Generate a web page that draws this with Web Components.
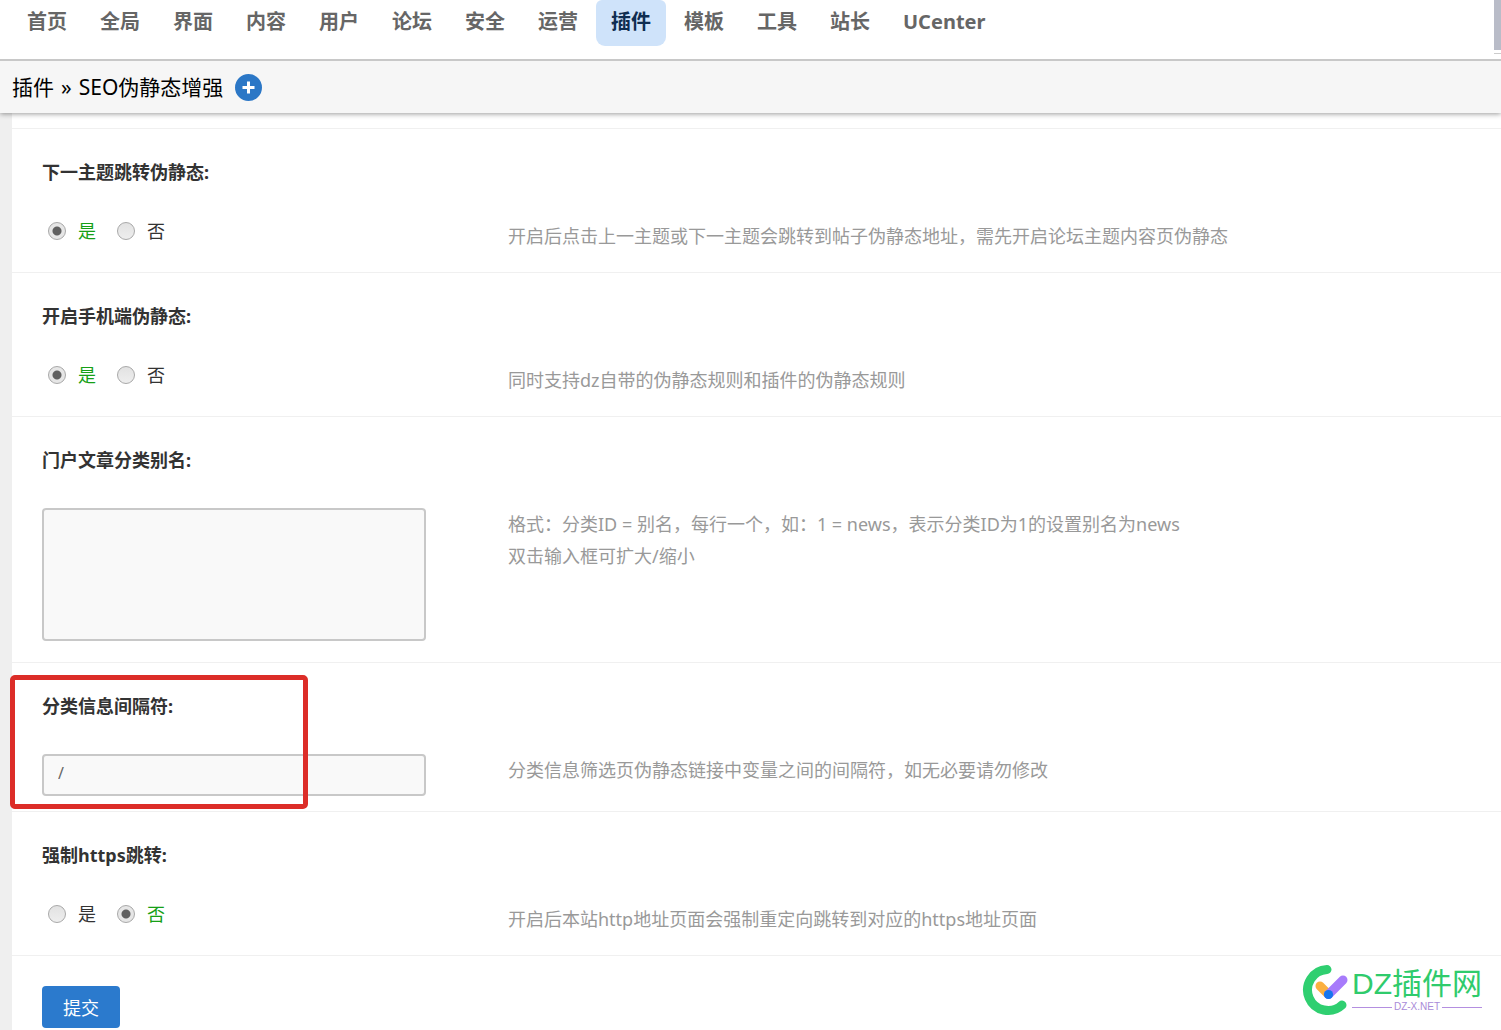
<!DOCTYPE html>
<html lang="zh-CN">
<head>
<meta charset="utf-8">
<title>SEO伪静态增强</title>
<style>
  html { background: #efefef; }
  body { margin: 0; font: 18px/32px "Noto Sans", "Noto Sans CJK SC", sans-serif; color: #333; }
</style>
</head>
<body>
<admin-page>
  <admin-nav slot="nav" items="首页,全局,界面,内容,用户,论坛,安全,运营,插件,模板,工具,站长,UCenter" current="插件"></admin-nav>
  <crumb-bar slot="crumb" parent="插件">SEO伪静态增强</crumb-bar>
  <setting-row heading="下一主题跳转伪静态:">
    <yes-no name="next" value="是"></yes-no>
    <span slot="hint">开启后点击上一主题或下一主题会跳转到帖子伪静态地址，需先开启论坛主题内容页伪静态</span>
  </setting-row>
  <setting-row heading="开启手机端伪静态:">
    <yes-no name="mobile" value="是"></yes-no>
    <span slot="hint">同时支持dz自带的伪静态规则和插件的伪静态规则</span>
  </setting-row>
  <setting-row heading="门户文章分类别名:">
    <text-field label="门户文章分类别名" multiline></text-field>
    <span slot="hint">格式：分类ID = 别名，每行一个，如：1 = news，表示分类ID为1的设置别名为news<br>双击输入框可扩大/缩小</span>
  </setting-row>
  <setting-row heading="分类信息间隔符:" marked>
    <text-field label="分类信息间隔符" value="/"></text-field>
    <span slot="hint">分类信息筛选页伪静态链接中变量之间的间隔符，如无必要请勿修改</span>
  </setting-row>
  <setting-row heading="强制https跳转:">
    <yes-no name="https" value="否"></yes-no>
    <span slot="hint">开启后本站http地址页面会强制重定向跳转到对应的https地址页面</span>
  </setting-row>
  <submit-bar>提交</submit-bar>
  <site-mark slot="mark"></site-mark>
</admin-page>

<script>
class Base extends HTMLElement {
  connectedCallback() {
    if (this.shadowRoot) return;
    this.attachShadow({ mode: 'open' }).innerHTML =
      `<style>:host,*{box-sizing:border-box} ${this.css()}</style>${this.html()}`;
  }
}

customElements.define('admin-page', class extends Base {
  css() { return `
    :host { display: block; position: relative; min-height: 100vh; }
    header { position: relative; z-index: 1; }
    main { margin-left: 12px; padding-top: 15px; background: #fff; }
  `; }
  html() { return `
    <header><slot name="nav"></slot><slot name="crumb"></slot></header>
    <main><slot></slot></main>
    <slot name="mark"></slot>`; }
});

customElements.define('admin-nav', class extends Base {
  css() { return `
    :host { display: block; position: relative; height: 61px; background: #fff; border-bottom: 2px solid #c8c8c8; }
    nav { display: flex; gap: 3px; padding-left: 12px; }
    a { padding: 6px 15px 8px; font-size: 20px; font-weight: 700; color: #666; text-decoration: none; }
    a[aria-current] { background: #cfe3fa; color: #0f2d50; border-radius: 6px 6px 9px 9px; }
    i { position: absolute; right: 0; top: 0; width: 7px; height: 54px; border-bottom: 1px solid #ccc;
        background: linear-gradient(#b9bcc8 50px, #fff 50px); }
  `; }
  html() {
    const cur = this.getAttribute('current');
    return `<nav>${this.getAttribute('items').split(',').map(t =>
      `<a href="#"${t === cur ? ' aria-current="page"' : ''}>${t}</a>`).join('')}</nav><i></i>`;
  }
});

customElements.define('crumb-bar', class extends Base {
  css() { return `
    :host { display: flex; align-items: center; gap: 12px; height: 52px; padding-left: 12px;
            background: #f6f6f6; color: #000; font-size: 21px; box-shadow: 0 1px 5px rgba(0,0,0,.4); }
    .path { display: flex; gap: 7px; }
    button { display: block; width: 27px; height: 27px; padding: 0; border: 0; background: none; }
    svg { display: block; }
  `; }
  html() { return `
    <div class="path"><span>${this.getAttribute('parent')}</span><span>»</span><span><slot></slot></span></div>
    <button type="button" aria-label="添加"><svg width="27" height="27" viewBox="0 0 27 27">
      <circle cx="13.5" cy="13.5" r="13.5" fill="#2b77c6"/>
      <path d="M13.5 7.5v12M7.5 13.5h12" stroke="#fff" stroke-width="3"/></svg></button>`; }
});

customElements.define('setting-row', class extends Base {
  css() { return `
    :host { display: block; position: relative; padding: 27px 30px 0; border-top: 1px solid #f0f0f0; }
    h3 { margin: 0 0 32px; font-size: 18px; line-height: 32px; font-weight: 700; }
    .cols { display: flex; }
    .control { flex: 0 0 466px; padding-bottom: 15px; }
    .hint { flex: 1; padding-bottom: 20px; color: #999; }
    .mark { display: none; }
    :host([marked]) .mark { display: block; position: absolute; left: -2px; top: 12px; width: 298px; height: 134px;
      border: 5px solid #dc2d28; border-radius: 5px; pointer-events: none; }
  `; }
  html() { return `
    <h3>${this.getAttribute('heading')}</h3>
    <div class="cols"><div class="control"><slot></slot></div><div class="hint"><slot name="hint"></slot></div></div>
    <div class="mark"></div>`; }
});

customElements.define('yes-no', class extends Base {
  css() { return `
    :host { display: flex; gap: 21px; padding-left: 6px; line-height: 22px; }
    label { display: flex; align-items: center; gap: 12px; }
    label:has(:checked) { color: #16a016; }
    input { appearance: none; width: 18px; height: 18px; margin: 0; border: 1px solid #a8a8a8; border-radius: 50%;
            background: linear-gradient(#e2e2e2, #eee); }
    input:checked { background: radial-gradient(circle, #606060 4px, #e6e6e6 5px); }
  `; }
  html() {
    const v = this.getAttribute('value'), n = this.getAttribute('name');
    return ['是', '否'].map(t =>
      `<label><input type="radio" name="${n}"${t === v ? ' checked' : ''}><span>${t}</span></label>`).join('');
  }
});

customElements.define('text-field', class extends Base {
  css() { return `
    :host { display: block; }
    input, textarea { display: block; width: 384px; padding: 0 14px; border: 2px solid #c8c8c8; border-radius: 4px;
      background: #f9f9f9; color: #666; font: 16px "Noto Sans", "Noto Sans CJK SC", sans-serif; outline: 0; }
    input { height: 42px; padding-bottom: 4px; }
    textarea { height: 133px; margin-bottom: 6px; resize: none; }
  `; }
  html() {
    const l = this.getAttribute('label');
    return this.hasAttribute('multiline')
      ? `<textarea aria-label="${l}"></textarea>`
      : `<input type="text" aria-label="${l}" value="${this.getAttribute('value')}">`;
  }
});

customElements.define('submit-bar', class extends Base {
  css() { return `
    :host { display: block; padding: 30px 30px 2px; border-top: 1px solid #f0f0f0; }
    button { display: block; height: 42px; padding: 0 21px; border: 0; border-radius: 4px; background: #2b7acd; color: #fff;
      font: 18px "Noto Sans", "Noto Sans CJK SC", sans-serif; }
  `; }
  html() { return `<button type="submit"><slot></slot></button>`; }
});

customElements.define('site-mark', class extends Base {
  css() { return `
    :host { position: absolute; right: 19px; bottom: 14px; display: flex; align-items: center; gap: 2px;
      font-family: "Liberation Sans", "Noto Sans CJK SC", sans-serif; }
    svg { display: block; }
    .name { font-size: 30px; line-height: 34px; color: #2fcb6c; white-space: nowrap; }
    .net { display: flex; align-items: center; gap: 2px; font-size: 10px; line-height: 12px; color: #a98bd8; }
    .net::before, .net::after { content: ""; flex: 1; height: 1px; background: #b48fe0; }
  `; }
  html() { return `
    <svg width="49" height="52" viewBox="0 0 49 52" fill="none" stroke-linecap="round">
      <path d="M26 5.500A20.500 20.500 0 1 0 41 41" stroke="#2fcf70" stroke-width="9"/>
      <path d="M19 22L27 30" stroke="#fbb040" stroke-width="9"/>
      <path d="M27.500 30.500L42 16" stroke="#a77bfb" stroke-width="9"/>
      <circle cx="27.500" cy="30.500" r="4.600" fill="#1677ee"/>
    </svg>
    <div><div class="name">DZ插件网</div><div class="net">DZ-X.NET</div></div>`; }
});
</script>
</body>
</html>
